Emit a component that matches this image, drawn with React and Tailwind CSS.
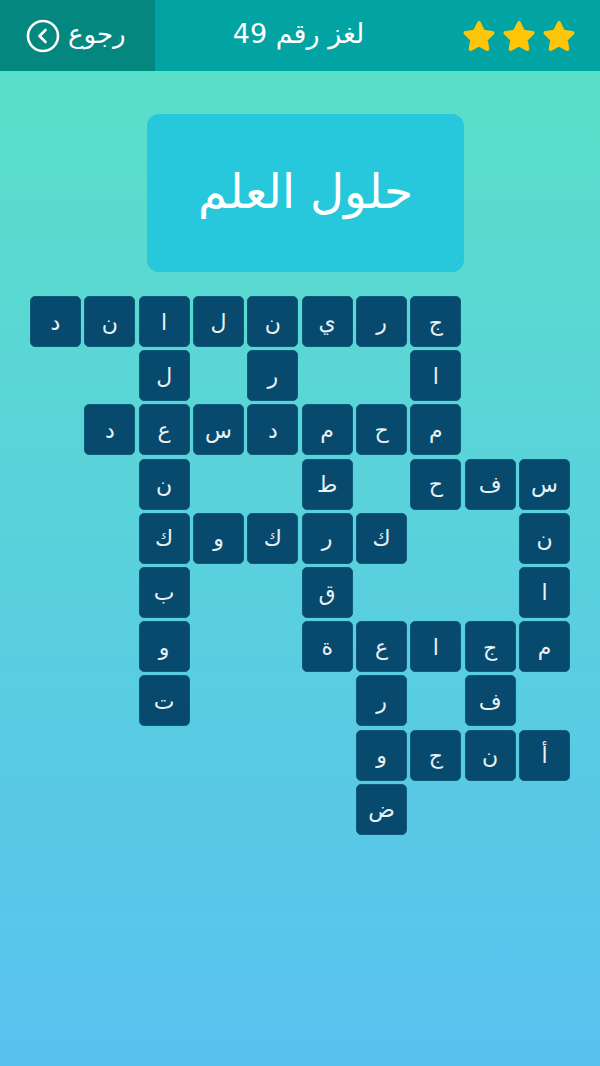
import React from "react";

const rows = [
  ["د", "ن", "ا", "ل", "ن", "ي", "ر", "ج", "", ""],
  ["", "", "ل", "", "ر", "", "", "ا", "", ""],
  ["", "د", "ع", "س", "د", "م", "ح", "م", "", ""],
  ["", "", "ن", "", "", "ط", "", "ح", "ف", "س"],
  ["", "", "ك", "و", "ك", "ر", "ك", "", "", "ن"],
  ["", "", "ب", "", "", "ق", "", "", "", "ا"],
  ["", "", "و", "", "", "ة", "ع", "ا", "ج", "م"],
  ["", "", "ت", "", "", "", "ر", "", "ف", ""],
  ["", "", "", "", "", "", "و", "ج", "ن", "أ"],
  ["", "", "", "", "", "", "ض", "", "", ""],
];

const Star = () => (
  <svg width="38" height="38" viewBox="0 0 24 24">
    <path
      d="M12 3.2l2.65 5.4 5.95.87-4.3 4.2 1 5.93L12 16.8l-5.3 2.8 1-5.93-4.3-4.2 5.95-.87z"
      fill="#ffc508"
      stroke="#ffc508"
      strokeWidth="2.4"
      strokeLinejoin="round"
    />
  </svg>
);

const App = () => {
  return (
    <div
      className="w-[600px] h-[1066px] overflow-hidden bg-gradient-to-b from-[#5be1c6] to-[#59c1ef]"
      style={{ fontFamily: '"DejaVu Sans", "Noto Sans", sans-serif' }}
    >
      <div className="flex h-[71px] bg-[#02a3a3] text-white">
        <button className="w-[155px] h-full bg-[#03877f] flex items-center pl-[26px] gap-[8px]">
          <svg width="34" height="34" viewBox="0 0 34 34" fill="none">
            <circle cx="17" cy="17" r="15" stroke="white" strokeWidth="2.6" />
            <path d="M19.5 11l-6 6 6 6" stroke="white" strokeWidth="2.6" strokeLinecap="round" strokeLinejoin="round" />
          </svg>
          <span className="text-[26px] leading-none pb-[4px]">رجوع</span>
        </button>
        <div className="flex-1 flex items-center justify-center pr-[8px]">
          <span className="text-[27px] leading-none pb-[4px]" dir="rtl">لغز رقم 49</span>
        </div>
        <div className="flex items-center gap-[2px] pr-[22px] pl-[10px] pt-[3px]">
          <Star />
          <Star />
          <Star />
        </div>
      </div>
      <div className="h-[3px] bg-[#4fe2cf]" />

      <div className="ml-[147px] mt-[40px] w-[317px] h-[158px] rounded-[12px] bg-[#27c7dc] flex items-center justify-center">
        <span className="text-white text-[47px] leading-none pb-[4px]" dir="rtl">حلول العلم</span>
      </div>

      <div className="ml-[30px] mt-[24px] w-[540px] grid grid-cols-10 gap-x-[3.3px] gap-y-[3.2px]">
        {rows.flat().map((ch, i) =>
          ch ? (
            <div
              key={i}
              className="h-[51px] rounded-[5px] bg-[#074a6d] border border-[#0f5a7c] flex items-center justify-center text-[#e8f1f6] text-[22px] leading-none pt-[2px]"
            >
              {ch}
            </div>
          ) : (
            <div key={i} className="h-[51px]" />
          )
        )}
      </div>
    </div>
  );
};

export default App;
